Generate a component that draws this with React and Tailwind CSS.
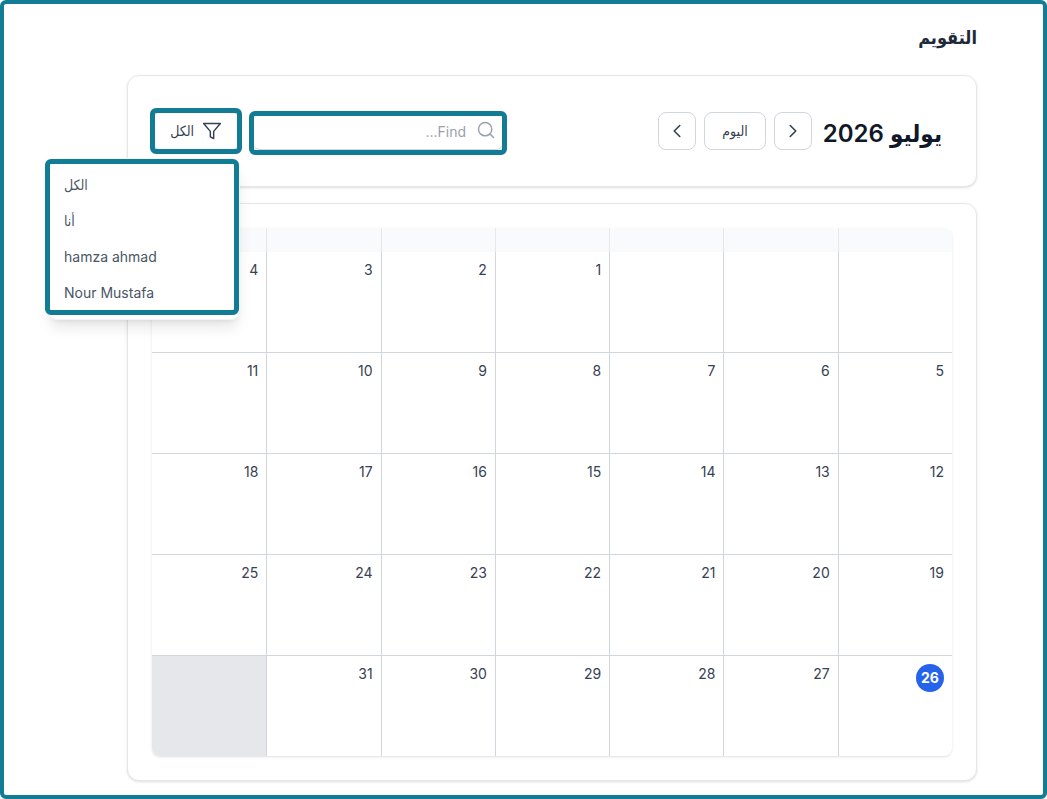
import { useState } from "react";
import { FiChevronLeft, FiChevronRight, FiFilter, FiSearch } from "react-icons/fi";

const weeks = [
  [null, null, null, 1, 2, 3, 4],
  [5, 6, 7, 8, 9, 10, 11],
  [12, 13, 14, 15, 16, 17, 18],
  [19, 20, 21, 22, 23, 24, 25],
  [26, 27, 28, 29, 30, 31, "outside"],
];

const people = ["الكل", "أنا", "hamza ahmad", "Nour Mustafa"];
const today = 26;

// Teal frame drawn over a control
const Highlight = ({ className }) => (
  <span
    className={`absolute pointer-events-none border-[5px] border-[#117c93] rounded-md ${className}`}
  />
);

const Toolbar = () => {
  const [search, setSearch] = useState("");
  const [filter, setFilter] = useState("الكل");

  return (
    <section className="flex items-center justify-between rounded-xl border border-gray-200 bg-white h-28 px-6 shadow-sm">
      <div className="flex items-end gap-[11px] ps-[10px]">
        <h2 className="text-2xl font-semibold text-gray-900">يوليو 2026</h2>
        <div className="flex gap-2">
          <button
            type="button"
            aria-label="السابق"
            className="flex size-[38px] items-center justify-center rounded-lg border border-gray-300 text-gray-700"
          >
            <FiChevronRight size={22} strokeWidth={1.75} />
          </button>
          <button
            type="button"
            className="h-[38px] px-[17px] rounded-lg border border-gray-300 text-sm font-medium text-gray-700"
          >
            اليوم
          </button>
          <button
            type="button"
            aria-label="التالي"
            className="flex size-[38px] items-center justify-center rounded-lg border border-gray-300 text-gray-700"
          >
            <FiChevronLeft size={22} strokeWidth={1.75} />
          </button>
        </div>
      </div>

      <div className="flex items-center gap-3">
        <div className="relative w-[252px]">
          <input
            type="text"
            aria-label="Find"
            placeholder="Find..."
            value={search}
            onChange={(e) => setSearch(e.target.value)}
            className="block w-full h-[38px] ps-[37px] pe-3 rounded-lg border border-gray-300 text-sm text-gray-700 placeholder:text-gray-400"
          />
          <FiSearch size={20} strokeWidth={1.75} className="absolute right-2 top-2 text-gray-400" />
          <Highlight className="-inset-x-[3px] -top-px -bottom-[5px]" />
        </div>

        <div className="relative">
          <button
            type="button"
            aria-expanded="true"
            className="flex w-[88px] h-[38px] items-center gap-2 px-[17px] rounded-lg border border-gray-300 text-sm font-medium text-gray-700"
          >
            <FiFilter size={20} strokeWidth={1.75} className="shrink-0" />
            {filter}
          </button>
          <Highlight className="-inset-x-0.5 -inset-y-1" />

          <div
            dir="ltr"
            className="absolute right-0 top-full mt-2 w-48 py-2 z-10 rounded-lg border border-gray-100 bg-white shadow-lg"
          >
            {people.map((person) => (
              <button
                key={person}
                type="button"
                onClick={() => setFilter(person)}
                className="block w-full h-9 px-[15px] text-left text-sm text-gray-600"
              >
                {person}
              </button>
            ))}
            <Highlight className="-left-1 right-0 top-0 bottom-1" />
          </div>
        </div>
      </div>
    </section>
  );
};

const DayCell = ({ day }) => {
  if (day === "outside") {
    return <td className="bg-gray-200" />;
  }

  return (
    <td className="p-2 align-top border-gray-300 not-last:border-e">
      {day === today ? (
        <span className="flex size-7 items-center justify-center rounded-full bg-[#2563eb] font-bold text-white">
          {day}
        </span>
      ) : (
        day
      )}
    </td>
  );
};

const Month = () => (
  <section className="rounded-xl border border-gray-200 bg-white p-6 shadow-sm">
    <div className="overflow-hidden rounded-lg shadow-sm">
      <table className="w-full table-fixed border-separate border-spacing-0 text-sm text-gray-700">
        <thead>
          <tr className="h-6 bg-gray-50">
            {weeks[0].map((_, i) => (
              <th key={i} className="border-gray-200 not-last:border-e" />
            ))}
          </tr>
        </thead>
        <tbody>
          {weeks.map((week, i) => (
            <tr key={i} className="h-[101px] last:h-[100px] not-last:*:border-b">
              {week.map((day, j) => (
                <DayCell key={j} day={day} />
              ))}
            </tr>
          ))}
        </tbody>
      </table>
    </div>
  </section>
);

export default function App() {
  return (
    <main
      dir="rtl"
      className="min-h-screen rounded-md border-4 border-[#117c93] bg-white ps-[66px] pe-[123px] pt-[18px] pb-3 font-['Inter','DejaVu_Sans_Condensed','DejaVu_Sans',sans-serif]"
    >
      <h1 className="mb-[22px] text-lg leading-[31px] font-semibold text-gray-800">التقويم</h1>
      <div className="flex flex-col gap-4">
        <Toolbar />
        <Month />
      </div>
    </main>
  );
}
